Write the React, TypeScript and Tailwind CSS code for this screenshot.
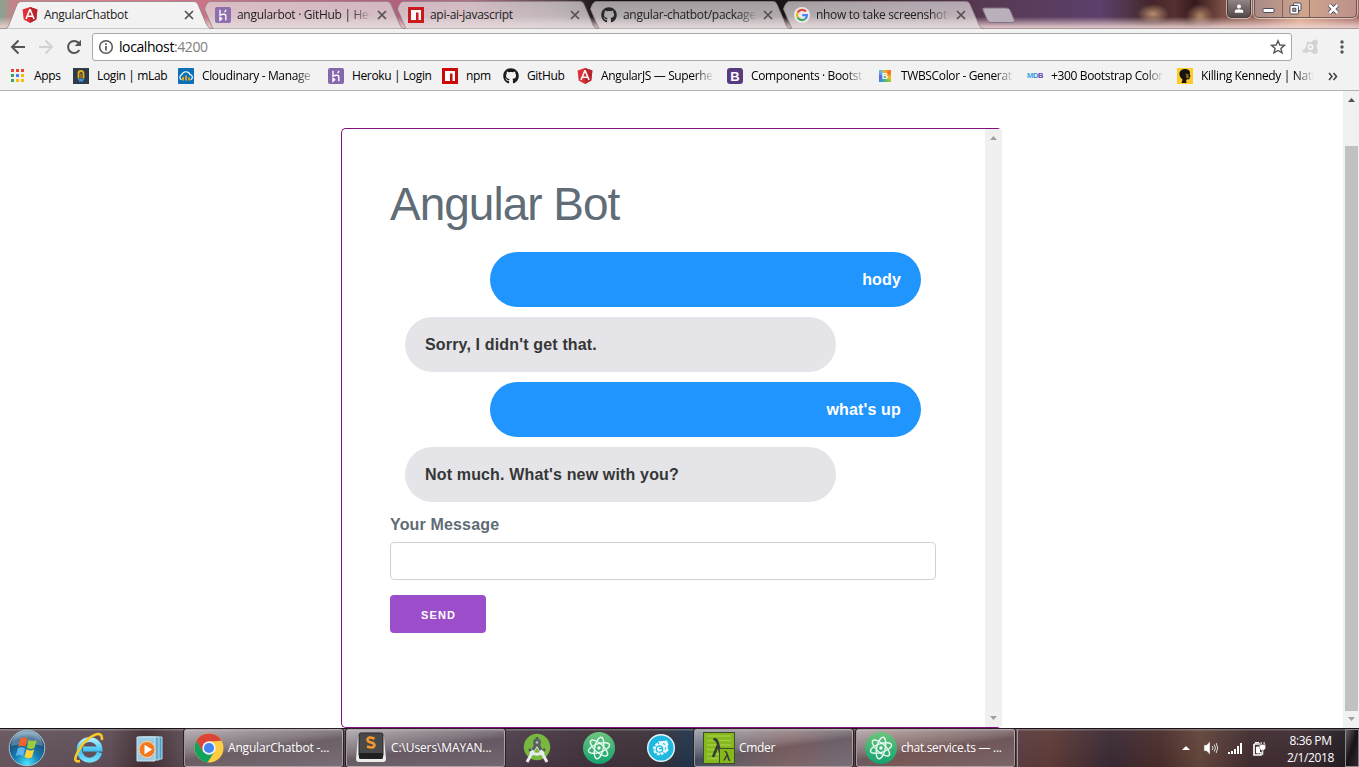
import type { ReactNode } from 'react';
import { FaGithub } from 'react-icons/fa';

function AngularIcon() {
  return (
    <svg width="16" height="16" viewBox="0 0 16 16">
      <path d="M8 0 15.4 2.6 14.3 12.4 8 16 1.7 12.4.6 2.6Z" fill="#dd2f35" />
      <path d="M8 0 15.4 2.6 14.3 12.4 8 16Z" fill="#b9252f" />
      <path d="M8 2.3 4 12M8 2.3 12 12M5.6 9.3h4.8" stroke="#fff" strokeWidth="1.6" fill="none" />
    </svg>
  );
}

function HerokuIcon() {
  return (
    <svg width="16" height="16" viewBox="0 0 16 16">
      <rect width="16" height="16" rx="2" fill="#8667ab" />
      <path d="M5 2.8v5.4c2-1.2 5.8-1.7 5.8.5v4.6M10.8 2.8c0 1-.5 1.8-1.2 2.3M5 10.3v3l1.7-1.5z" stroke="#fff" strokeWidth="1.4" fill="none" />
    </svg>
  );
}

function NpmIcon() {
  return (
    <svg width="16" height="16" viewBox="0 0 16 16">
      <rect width="16" height="16" fill="#cb0909" />
      <path d="M3 3h10v10h-2.5V5.5H8V13H3z" fill="#fff" />
    </svg>
  );
}

function GoogleIcon() {
  return (
    <svg width="16" height="16" viewBox="0 0 16 16">
      <circle cx="8" cy="8" r="8" fill="#f3f0f1" />
      <g fill="none" strokeWidth="2.2">
        <path d="M11.9 4.6A5 5 0 0 0 3.7 5.6" stroke="#e34133" />
        <path d="M3.7 5.6a5 5 0 0 0 0 4.9" stroke="#f3b605" />
        <path d="M3.7 10.5a5 5 0 0 0 7.4 1.5" stroke="#32a350" />
        <path d="M11.1 12a5 5 0 0 0 1.9-3.9H8.2" stroke="#4280ef" />
      </g>
    </svg>
  );
}

function AppsIcon() {
  const colors = ['#ea4335', '#ea4335', '#ea4335', '#34a853', '#4285f4', '#fbbc05', '#34a853', '#fbbc05', '#fbbc05'];
  return (
    <svg width="16" height="16" viewBox="0 0 16 16">
      {colors.map((c, i) => (
        <rect key={i} x={1 + (i % 3) * 5} y={1 + Math.floor(i / 3) * 5} width="3" height="3" fill={c} />
      ))}
    </svg>
  );
}

function MlabIcon() {
  return (
    <svg width="16" height="16" viewBox="0 0 16 16">
      <rect width="16" height="16" fill="#303b48" />
      <path d="M5.500 10.500V5.500a2.500 2.500 0 0 1 5 0v5" stroke="#e9b01c" strokeWidth="1.800" fill="none" />
      <path d="M8 5.500v5" stroke="#c98f1c" strokeWidth="1.200" />
      <path d="M5 11.500h6M6 13h4" stroke="#3b8fd0" strokeWidth="1.400" />
    </svg>
  );
}

function CloudinaryIcon() {
  return (
    <svg width="16" height="16" viewBox="0 0 16 16">
      <rect width="16" height="16" rx="1" fill="#0c70b8" />
      <path d="M3.5 11.7A2.6 2.6 0 0 1 3.7 6.8a4.5 4.5 0 0 1 8.5-.1 2.6 2.6 0 0 1 .5 5" stroke="#fff" strokeWidth="1.2" fill="none" />
      <path d="M5 12.5V9M8 12.5V7.5M11 12.5V9.5" stroke="#f5a623" strokeWidth="1.8" />
    </svg>
  );
}

function BootstrapIcon() {
  return (
    <span className="flex size-4 items-center justify-center rounded-[3px] bg-[#573a80] font-['Liberation_Sans',sans-serif] text-[13px] leading-none font-bold text-white">B</span>
  );
}

function TwbsIcon() {
  return (
    <span className="ml-[2px] flex h-3 w-3 items-center justify-center bg-[conic-gradient(#f7b32b,#f26b1d,#f0c020,#7ac143,#2aa9c9,#6a5acd,#58b6e8,#f7b32b)] font-['Liberation_Sans',sans-serif] text-[9px] leading-none font-bold text-white">B</span>
  );
}

function MdbIcon() {
  return (
    <span className="flex w-4 font-['Liberation_Sans',sans-serif] text-[7.5px] leading-none font-black tracking-[-0.3px]">
      <span className="text-[#2aa8e0]">M</span><span className="text-[#3888d8]">D</span><span className="text-[#6b3fb5]">B</span>
    </span>
  );
}

function KennedyIcon() {
  return (
    <svg width="16" height="16" viewBox="0 0 16 16">
      <rect width="16" height="16" fill="#fecb2f" />
      <path d="M2.500 4.500Q4 .8 8 1t5 3l-.3 2 1 2.300-1 .5v1.700l-1.200 1-1.500-.2-1 1.700.8 2H4.500l1-3.500Q1.800 8.500 2.500 4.500Z" fill="#17150e" />
      <path d="M8.300 5.500l3.200.8.2 3.500-1.500.9-1.400-1.900.7-1.400Z" fill="#8a6b1b" />
    </svg>
  );
}

const tabs: { title: string; icon: ReactNode; fade?: boolean }[] = [
  { title: 'AngularChatbot', icon: <AngularIcon /> },
  { title: 'angularbot · GitHub | Her', icon: <HerokuIcon />, fade: true },
  { title: 'api-ai-javascript', icon: <NpmIcon /> },
  { title: 'angular-chatbot/package', icon: <FaGithub size={16} color="#1b1b1b" />, fade: true },
  { title: 'nhow to take screenshots', icon: <GoogleIcon />, fade: true },
];

const tabLayers = ['z-50', 'z-40', 'z-30', 'z-20', 'z-10'];

function Tab({ index }: { index: number }) {
  const { title, icon, fade } = tabs[index];
  const active = index === 0;
  return (
    <div className={`relative flex h-[29px] w-[193px] shrink-0 items-center pl-[17px] pt-px ${tabLayers[index]}`}>
      <svg className="absolute top-0 left-0" width="208" height="29" viewBox="0 0 208 29">
        <defs>
          <linearGradient id={`tab${index}`} x1="0" y1="0" x2="0" y2="1">
            <stop offset="0" stopColor="#e2dddf" stopOpacity=".68" />
            <stop offset=".5" stopColor="#e0d9db" stopOpacity=".76" />
            <stop offset="1" stopColor="#e2d9da" stopOpacity=".88" />
          </linearGradient>
        </defs>
        <path d={active ? 'M0 29C3 28 3.500 26 4.500 23.500L12 4.500Q13.300 1.500 16 1.500H189Q192 1.500 193 4.500L201.500 24.500Q203.500 28.500 207 29Z' : 'M15 29L6.500 9Q9 1.500 12 1.500H189Q192 1.500 193 4.500L202 25Q203.500 28.500 207 29Z'} fill={active ? '#f2f2f2' : `url(#tab${index})`} stroke="#8f8284" strokeOpacity=".8" />
      </svg>
      <span className={`relative flex w-[22px] shrink-0 ${active ? '' : 'opacity-90'}`}>{icon}</span>
      <span className={`relative w-[134px] whitespace-nowrap tracking-[-0.3px] text-[#222] ${fade ? '[mask-image:linear-gradient(to_right,#000_85%,transparent)]' : ''}`}>{title}</span>
      <svg className="relative ml-[6px] shrink-0" width="10" height="10" viewBox="0 0 10 10">
        <path d="M1 1l8 8M9 1l-8 8" stroke="#555052" strokeWidth="1.7" />
      </svg>
    </div>
  );
}

function WindowControls() {
  return (
    <div className="flex items-start">
      <div className="mr-[3px] flex h-[18px] w-[24px] items-center justify-center rounded-b-[5px] border border-t-0 border-[#493b3b] bg-linear-to-b from-[#8f8583] to-[#56494a] shadow-[0_0_0_1px_#ffffff88]">
        <svg width="10" height="10" viewBox="0 0 10 10"><circle cx="5" cy="2.600" r="2" fill="#fff" /><path d="M.8 8.800V7.200Q1 5.300 5 5.300T9.200 7.200v1.600Z" fill="#fff" /></svg>
      </div>
      <div className="flex h-[18px] w-[103px] rounded-b-[5px] border border-t-0 border-[#6c5654] bg-linear-to-r from-[#a98a86] via-[#d0a58c] to-[#bd908a] shadow-[0_0_0_1px_#ffffff88]">
        <span className="flex w-[28px] items-center justify-center border-r border-[#7d6560]">
          <svg width="13" height="12" viewBox="0 0 13 12"><rect x="1" y="5.500" width="11" height="4" rx="1" fill="#fff" stroke="#4b4c60" /></svg>
        </span>
        <span className="flex w-[27px] items-center justify-center border-r border-[#7d6560] pr-[2px]">
          <svg width="13" height="13" viewBox="0 0 13 13"><g fill="#fff" stroke="#4b4c60"><rect x="4.500" y="1" width="7.500" height="7.500" rx="1" /><rect x="1" y="3.500" width="8.500" height="8.500" rx="1" /><rect x="3.800" y="6.300" width="3" height="3" fill="#c59b8c" /></g></svg>
        </span>
        <span className="flex flex-1 items-center justify-center">
          <svg width="13" height="12" viewBox="0 0 13 12"><path d="M2.500 2l8 8M10.500 2l-8 8" stroke="#4b4c60" strokeWidth="4.400" /><path d="M2.500 2l8 8M10.500 2l-8 8" stroke="#fff" strokeWidth="2.600" /></svg>
        </span>
      </div>
    </div>
  );
}

function TabStrip() {
  return (
    <div className="flex h-[29px] shrink-0 items-start border-b border-[#a99a9c] bg-[linear-gradient(to_bottom,transparent_60%,rgba(240,213,211,.85)_96%),radial-gradient(16px_10px_at_1153px_14px,#b98d6d,transparent),radial-gradient(14px_12px_at_1200px_16px,#b08565,transparent),linear-gradient(to_right,#85a590_0,#c9808a_14px,#d97f90_90px,#c66f86_240px,#b0617c_400px,#b06f85_470px,#54424b_560px,#151214_600px,#191417_780px,#34232f_860px,#573852_980px,#5d406b_1100px,#4f3448_1128px,#42262b_1150px,#55302f_1175px,#34191c_1195px,#7b4e45_1222px,#9b695c_1260px,#dba583_1300px,#a06461_1359px)] pl-[5px]">
      {tabs.map((_, i) => <Tab key={i} index={i} />)}
      <svg className="ml-[11px] mt-[7px] shrink-0" width="35" height="17" viewBox="0 0 35 17">
        <path d="M3 1H25Q28 1 29 3L33.500 13.500Q34 15.500 31 15.500H10Q7.500 15.500 6.500 13.500L2 3Q1 1 3 1Z" fill="#b9b0bc" stroke="#827380" />
      </svg>
      <div className="ml-auto mr-[2px]"><WindowControls /></div>
    </div>
  );
}

function Toolbar() {
  return (
    <div className="flex h-[33px] shrink-0 items-center bg-[#f2f2f2] pt-[3px]">
      <div className="flex w-[92px] items-center gap-[12px] pl-[10px]">
        <svg width="16" height="16" viewBox="0 0 16 16"><path d="M15 8H2.500M8.500 1.500 2 8l6.500 6.500" stroke="#555" strokeWidth="2" fill="none" /></svg>
        <svg width="16" height="16" viewBox="0 0 16 16"><path d="M1 8h12.500M7.500 1.500 14 8l-6.500 6.500" stroke="#d2d2d2" strokeWidth="2" fill="none" /></svg>
        <svg width="16" height="16" viewBox="0 0 16 16"><path d="M13.300 11A6 6 0 1 1 12.600 4" stroke="#555" strokeWidth="2" fill="none" /><path d="M15 .8V7H8.800Z" fill="#555" /></svg>
      </div>
      <div className="flex h-[28px] w-[1200px] items-center rounded-[3px] border border-[#a9a9a9] bg-white pl-[5px] pr-[5px]">
        <svg width="16" height="16" viewBox="0 0 16 16"><circle cx="8" cy="8" r="6.300" stroke="#555" strokeWidth="1.500" fill="none" /><path d="M8 7v4.500M8 4.300v1.700" stroke="#555" strokeWidth="1.700" /></svg>
        <span className="ml-[5px] -mt-px text-[14px] tracking-[-0.41px] text-black">localhost<span className="text-[#808080]">:4200</span></span>
        <svg className="ml-auto" width="16" height="16" viewBox="0 0 16 16"><path d="M8 1.800 9.800 6l4.600.4-3.500 3 1.100 4.500L8 11.500 4 13.900l1.100-4.500-3.500-3L6.200 6Z" stroke="#555" strokeWidth="1.400" fill="none" /></svg>
      </div>
      <svg className="ml-[10px]" width="17" height="16" viewBox="0 0 17 16"><path d="M5 2.500 9 3.500Q11 .5 14.500.5L16 3 14.500 7l1.500 5-1.500 3-3.500-.500-2.500-2-4.500 1.500L0 13l1-2 2.500-2Z" fill="#d3d3d3" /><circle cx="8.500" cy="8" r="3" fill="#f5f5f5" /><circle cx="8.500" cy="8" r="1.300" fill="#d0d0d0" /></svg>
      <svg className="ml-[21px]" width="4" height="14" viewBox="0 0 4 14"><g fill="#555"><circle cx="2" cy="2" r="1.700" /><circle cx="2" cy="7" r="1.700" /><circle cx="2" cy="12" r="1.700" /></g></svg>
    </div>
  );
}

const bookmarks: { label: string; icon: ReactNode; width: string; fade?: boolean }[] = [
  { label: 'Apps', icon: <AppsIcon />, width: 'w-[63px]' },
  { label: 'Login | mLab', icon: <MlabIcon />, width: 'w-[105px]' },
  { label: 'Cloudinary - Manage', icon: <CloudinaryIcon />, width: 'w-[150px]', fade: true },
  { label: 'Heroku | Login', icon: <HerokuIcon />, width: 'w-[114px]' },
  { label: 'npm', icon: <NpmIcon />, width: 'w-[61px]' },
  { label: 'GitHub', icon: <FaGithub size={16} color="#1b1b1b" />, width: 'w-[74px]' },
  { label: 'AngularJS — Superhe', icon: <AngularIcon />, width: 'w-[150px]', fade: true },
  { label: 'Components · Bootst', icon: <BootstrapIcon />, width: 'w-[150px]', fade: true },
  { label: 'TWBSColor - Generat', icon: <TwbsIcon />, width: 'w-[150px]', fade: true },
  { label: '+300 Bootstrap Color', icon: <MdbIcon />, width: 'w-[150px]', fade: true },
  { label: 'Killing Kennedy | Nati', icon: <KennedyIcon />, width: 'w-[150px]', fade: true },
];

function BookmarksBar() {
  return (
    <div className="flex h-[29px] shrink-0 items-center border-b border-[#b2b2b2] bg-[#f2f2f2] pl-[10px] text-black">
      {bookmarks.map((b) => (
        <div key={b.label} className={`flex shrink-0 items-center ${b.width}`}>
          <span className="flex w-[24px] shrink-0">{b.icon}</span>
          <span className={`whitespace-nowrap tracking-[-0.36px] ${b.fade ? 'w-[113px] [mask-image:linear-gradient(to_right,#000_83%,transparent)]' : ''}`}>{b.label}</span>
        </div>
      ))}
      <svg className="ml-px" width="10" height="9" viewBox="0 0 10 9"><path d="M1 1l3 3.500-3 3.500M5.500 1l3 3.500-3 3.500" stroke="#444" strokeWidth="1.600" fill="none" /></svg>
    </div>
  );
}

function Arrow({ up, dark }: { up?: boolean; dark?: boolean }) {
  return (
    <svg className="shrink-0" width="7" height="4" viewBox="0 0 7 4">
      <path d={up ? 'M3.500 0 7 4H0Z' : 'M0 0h7L3.500 4Z'} fill={dark ? '#505050' : '#a0a0a0'} />
    </svg>
  );
}

const messages = [
  { text: 'hody', mine: true },
  { text: "Sorry, I didn't get that.", mine: false },
  { text: "what's up", mine: true },
  { text: "Not much. What's new with you?", mine: false },
];

function ChatCard() {
  return (
    <div className="flex h-[600px] w-[661px] rounded-[5px] border border-r-0 border-[#7d117f] font-['Liberation_Sans',sans-serif]">
      <div className="flex min-w-0 flex-1 flex-col pl-[48px] pr-[49px] pt-[47px]">
        <h1 className="mb-[20px] text-[46px] leading-[56px] font-normal tracking-[-1px] text-[#606c76]">Angular Bot</h1>
        <div className="flex flex-col gap-[10px] px-[15px]">
          {messages.map((m) => (
            <div
              key={m.text}
              className={`flex h-[55px] w-[431px] items-center rounded-[28px] px-[20px] text-[16px] font-bold tracking-[0.16px] ${m.mine ? 'justify-end self-end bg-[#2095fe] text-white' : 'bg-[#e4e4e9] text-[#363636]'}`}
            >
              {m.text}
            </div>
          ))}
        </div>
        <label className="mt-[10px] mb-[5px] text-[16px] leading-[25px] font-bold tracking-[0.16px] text-[#606c76]">Your Message</label>
        <input className="h-[38px] w-full rounded-[4px] border border-[#d1d1d1] px-[10px] outline-none" />
        <button className="mt-[15px] h-[38px] w-[96px] rounded-[4px] bg-[#9b4dca] pt-[2px] pl-px text-[11px] font-bold tracking-[1.1px] text-white">SEND</button>
      </div>
      <div className="flex w-[17px] flex-col items-center justify-between bg-[#f0f0f0] pt-[7px] pb-[7px]">
        <Arrow up />
        <Arrow />
      </div>
    </div>
  );
}

function PageScrollbar() {
  return (
    <div className="flex w-[16px] flex-col items-center bg-[#f1f1f1] pt-[7px]">
      <Arrow up dark />
      <div className="mt-[44px] mb-[6px] ml-px h-[565px] w-[13px] shrink-0 bg-[#c1c1c1]" />
      <Arrow />
    </div>
  );
}

function StartOrb() {
  return (
    <svg width="38" height="38" viewBox="0 0 38 38">
      <defs>
        <radialGradient id="orb" cx=".5" cy=".95" r=".9"><stop offset="0" stopColor="#4de4ff" /><stop offset=".4" stopColor="#1680b4" /><stop offset=".8" stopColor="#1c4d78" /><stop offset="1" stopColor="#7ca5bd" /></radialGradient>
      </defs>
      <circle cx="19" cy="19" r="17.800" fill="url(#orb)" stroke="#a8bfcb" strokeWidth="1" />
      <path d="M3 17Q5 3 19 3t16 14Q19 12 3 17Z" fill="#fff" opacity=".25" />
      <path d="M12.500 9.500q4-2 7 .3l-2 8q-3-2-7.300-.2z" fill="#f2622c" />
      <path d="M20.800 10.700q3.500 2.300 8 .3l-2.300 8q-4 2-7.700-.2z" fill="#9ccc3c" />
      <path d="M9.900 19.200q4-1.800 7.200.2l-2.100 7.800q-3-2-7.200-.3z" fill="#5fb5ef" />
      <path d="M18.500 20.300q3.500 2.200 7.700.2l-2.200 7.700q-4 2-7.500-.2z" fill="#fdd23a" />
    </svg>
  );
}

function IeIcon() {
  return (
    <svg width="32" height="32" viewBox="0 0 32 32">
      <defs><linearGradient id="ie" x1="0" y1="0" x2="0" y2="1"><stop offset="0" stopColor="#a7edff" /><stop offset=".55" stopColor="#3cc1f2" /><stop offset="1" stopColor="#73dcfa" /></linearGradient></defs>
      <path d="M26.500 20.500A10.300 10.300 0 1 1 26.800 17H10" stroke="url(#ie)" strokeWidth="5.200" fill="none" />
      <path d="M7 29Q-1 31 4.500 20.500 11 8 21 3.200 30-.5 28.800 8" stroke="#f8c928" strokeWidth="2.600" fill="none" />
    </svg>
  );
}

function WmpIcon() {
  return (
    <svg width="28" height="26" viewBox="0 0 28 26">
      <path d="M6 1h20v22H6Z" fill="#4e9dc8" stroke="#b8def0" />
      <path d="M3 1h20v23H3Z" fill="#64acd2" stroke="#b8def0" />
      <path d="M1 1h18v24H1Z" fill="#9fcbe0" stroke="#c8e5f2" />
      <circle cx="11" cy="13.500" r="8" fill="#f27a22" stroke="#ffd1a2" />
      <path d="M8.500 8.700v9.600l7.500-4.800Z" fill="#fff" />
    </svg>
  );
}

function ChromeIcon() {
  return (
    <svg width="30" height="30" viewBox="0 0 30 30">
      <circle cx="15" cy="15" r="14.500" fill="#ffcd41" />
      <path d="M15 15 8.500 18.500 2.400 7.800A14.500 14.500 0 0 1 27.600 7.800L15 8.500Z" fill="#db4538" />
      <path d="M2.400 7.800A14.500 14.500 0 0 0 13.500 29.400L20.800 18.300 15 21.500 9 18.500Z" fill="#14a15d" />
      <circle cx="15" cy="15" r="6.700" fill="#f3f4f5" />
      <circle cx="15" cy="15" r="5.100" fill="#4384f4" />
    </svg>
  );
}

function SublimeIcon() {
  return (
    <svg width="32" height="32" viewBox="0 0 32 32">
      <path d="M3 5Q3 3 5 3h22q2 0 2 2l2 22q0 3-3 3H4q-3 0-3-3Z" fill="#ececec" />
      <rect x="4" y="1" width="24" height="24" rx="2" fill="#494949" stroke="#292929" />
      <path d="M4 21h24v5q0 1-2 1H6q-2 0-2-1Z" fill="#202020" />
      <path d="M19.500 6.800Q13 4 12.500 7.500q0 2.300 3.500 3t3.500 3Q18.800 16.800 12 14.500" stroke="#f6972b" strokeWidth="2.600" fill="none" />
    </svg>
  );
}

function AndroidStudioIcon() {
  return (
    <svg width="32" height="32" viewBox="0 0 32 32">
      <circle cx="16" cy="15" r="13.200" fill="#79b83f" />
      <path d="M16 8.500V5M8 17l2 2M24 17l-2 2" stroke="#53595a" strokeWidth="2.600" fill="none" />
      <path d="M15 14 6 30M17 14 26 30" stroke="#e9eced" strokeWidth="3" fill="none" />
      <path d="M9 20q7 4.500 14 0" stroke="#e9eced" strokeWidth="2.800" fill="none" />
      <path d="M14.500 13 12 18M17.500 13 20 18" stroke="#596062" strokeWidth="3" />
      <circle cx="16" cy="10.500" r="3.900" fill="#596062" /><circle cx="16" cy="10.500" r="1.400" fill="#a8b7a2" />
    </svg>
  );
}

function AtomIcon() {
  return (
    <svg width="32" height="32" viewBox="0 0 32 32">
      <defs><linearGradient id="atom" x1="0" y1="0" x2="0" y2="1"><stop offset="0" stopColor="#6dc57d" /><stop offset="1" stopColor="#12a26f" /></linearGradient></defs>
      <circle cx="16" cy="16" r="16" fill="url(#atom)" />
      <g fill="none" stroke="#e8faee" strokeWidth="1.400">
        <ellipse cx="16" cy="16" rx="11" ry="4.300" transform="rotate(-18 16 16)" />
        <ellipse cx="16" cy="16" rx="11" ry="4.300" transform="rotate(42 16 16)" />
        <ellipse cx="16" cy="16" rx="11" ry="4.300" transform="rotate(102 16 16)" />
      </g>
      <circle cx="16" cy="16" r="1.700" fill="#fff" />
    </svg>
  );
}

function GearShellIcon() {
  return (
    <svg width="28" height="28" viewBox="0 0 28 28">
      <circle cx="14" cy="14" r="13.300" fill="#20b8df" stroke="#e7f7fb" strokeWidth="1.400" />
      <circle cx="12.500" cy="15" r="5" fill="#e9f9fd" stroke="#e9f9fd" strokeWidth="3" strokeDasharray="2.500 1.300" />
      <path d="M11 7.500 20 6.500l1.500 4-1 2 1 4-3.500 3Z" fill="#e9f9fd" />
      <circle cx="12.500" cy="15" r="3.200" fill="none" stroke="#20b8df" strokeWidth="1.300" />
      <path d="M12 14.500h3.500M16 9.500l2 1M18.500 13.500v2" stroke="#20b8df" strokeWidth="1.300" />
    </svg>
  );
}

function CmderIcon() {
  return (
    <svg width="32" height="32" viewBox="0 0 32 32">
      <rect x=".5" y=".5" width="31" height="31" fill="#84b81c" stroke="#3f4d27" />
      <path d="M4 4h24M4 8.500h24M4 13h24M4 17.500h12M4 22h12M4 26.500h12" stroke="#a5cc45" strokeWidth="1.600" />
      <path d="M10.500 7.500q3-1 4.300 3.500l3.200 13q.5 1.500 2.500.8M15 13 10 25" stroke="#343c38" strokeWidth="2.600" fill="none" />
      <rect x="16.500" y="16.500" width="15" height="15" fill="#84b81c" stroke="#3f4d27" />
      <path d="M21.500 19.500q1.800-.2 2.500 2l1.800 6q.3 1 1.500.7M24 23l-3 5.500" stroke="#343c38" strokeWidth="1.500" fill="none" />
    </svg>
  );
}

function TaskButton({ icon, label, className }: { icon: ReactNode; label: string; className: string }) {
  return (
    <div className={`flex h-[38px] w-[159px] shrink-0 items-center rounded-[3px] border border-[#b8adb1]/70 bg-[linear-gradient(172deg,rgba(255,255,255,.55)_0%,rgba(255,255,255,.25)_40%,rgba(255,255,255,.11)_52%,rgba(255,255,255,.22)_100%)] text-white shadow-[0_0_0_1px_#2b2025] ${className}`}>
      {icon}
      <span className="ml-[4px] whitespace-nowrap">{label}</span>
    </div>
  );
}

function Tray() {
  return (
    <div className="ml-auto flex h-full items-center text-white">
      <svg width="8" height="4" viewBox="0 0 8 4"><path d="M4 0 8 4H0Z" fill="#fff" /></svg>
      <svg className="ml-[13px]" width="16" height="16" viewBox="0 0 16 16"><path d="M1 5h2.500L7 1.500v13L3.500 11H1Z" fill="#fff" stroke="#665" strokeWidth=".5" /><path d="M9.300 6q1.500 2 0 4M11.300 4.500q2.300 3.500 0 7M13.200 3q3 5 0 10" stroke="#ddd" fill="none" /></svg>
      <svg className="ml-[8px] mt-[2px]" width="16" height="14" viewBox="0 0 16 14"><path d="M1 10h2v2H1ZM4 9h2v3H4ZM7 7h2v5H7ZM10 4h2v8h-2ZM13 1h2v11h-2Z" fill="#fff" /></svg>
      <svg className="ml-[9px] mt-[2px]" width="15" height="16" viewBox="0 0 15 16"><path d="M2 3h6M2 3v11h7v-3" stroke="#fff" strokeWidth="1.700" fill="none" /><path d="M3 1.500h4M4.500 6h3v6h-3Z" stroke="#fff" fill="#fff" /><path d="M7.500 3.500h6v4l-2 2H9.500l-2-2ZM8.500 1h1.300v3H8.500ZM11.500 1h1.300v3h-1.300ZM9.800 9h1.500v5H9.800Z" fill="#fff" stroke="#544" strokeWidth=".3" /></svg>
      <div className="ml-[14px] flex w-[59px] flex-col items-center pt-px leading-[17px]">
        <span className="whitespace-nowrap tracking-[-0.4px]">8:36 PM</span>
        <span className="whitespace-nowrap tracking-[-0.4px]">2/1/2018</span>
      </div>
      <div className="ml-[5px] h-full w-[14px] border border-[#8e8688] bg-linear-to-br from-[#686165] via-[#171318] to-[#332a30]" />
    </div>
  );
}

function Taskbar() {
  return (
    <div className="flex h-[39px] shrink-0 items-center border-t border-[#16121a] bg-[linear-gradient(to_bottom,rgba(255,255,255,.28)_0,rgba(255,255,255,.28)_1px,rgba(255,255,255,.05)_2px,transparent_100%),linear-gradient(to_right,#64545c_0,#5c4b54_110px,#402c30_145px,#57474f_180px,#544650_350px,#4b3c49_510px,#40313b_580px,#3c3038_650px,#203348_688px,#4f424b_740px,#634244_790px,#534652_840px,#623e3b_890px,#563b40_1015px,#5c3935_1050px,#382833_1110px,#482b28_1160px,#604339_1200px,#3f2a2e_1250px,#3c2b30_1300px,#211b22_1345px)]">
      <div className="ml-[8px]"><StartOrb /></div>
      <div className="ml-[27px]"><IeIcon /></div>
      <div className="ml-[31px] mt-[2px]"><WmpIcon /></div>
      <TaskButton className="ml-[20px] pl-[9px] tracking-[-0.18px]" icon={<ChromeIcon />} label="AngularChatbot -..." />
      <TaskButton className="ml-[3px] pl-[8px] tracking-[-0.12px]" icon={<SublimeIcon />} label="C:\Users\MAYAN..." />
      <div className="ml-[16px]"><AndroidStudioIcon /></div>
      <div className="ml-[30px]"><AtomIcon /></div>
      <div className="ml-[32px]"><GearShellIcon /></div>
      <TaskButton className="ml-[19px] pl-[8px] tracking-[-0.3px]" icon={<CmderIcon />} label="Cmder" />
      <TaskButton className="ml-[3px] pl-[8px] tracking-[-0.3px]" icon={<AtomIcon />} label="chat.service.ts — ..." />
      <div className="ml-[2px] h-full w-px bg-[#a79a9b]" />
      <Tray />
    </div>
  );
}

export default function App() {
  return (
    <div className="flex h-[767px] w-[1359px] flex-col overflow-hidden bg-white font-['Open_Sans','Noto_Sans',sans-serif] text-[12px]">
      <TabStrip />
      <Toolbar />
      <BookmarksBar />
      <main className="flex min-h-0 flex-1">
        <div className="flex flex-1 justify-center pt-[37px]"><ChatCard /></div>
        <PageScrollbar />
      </main>
      <Taskbar />
    </div>
  );
}
